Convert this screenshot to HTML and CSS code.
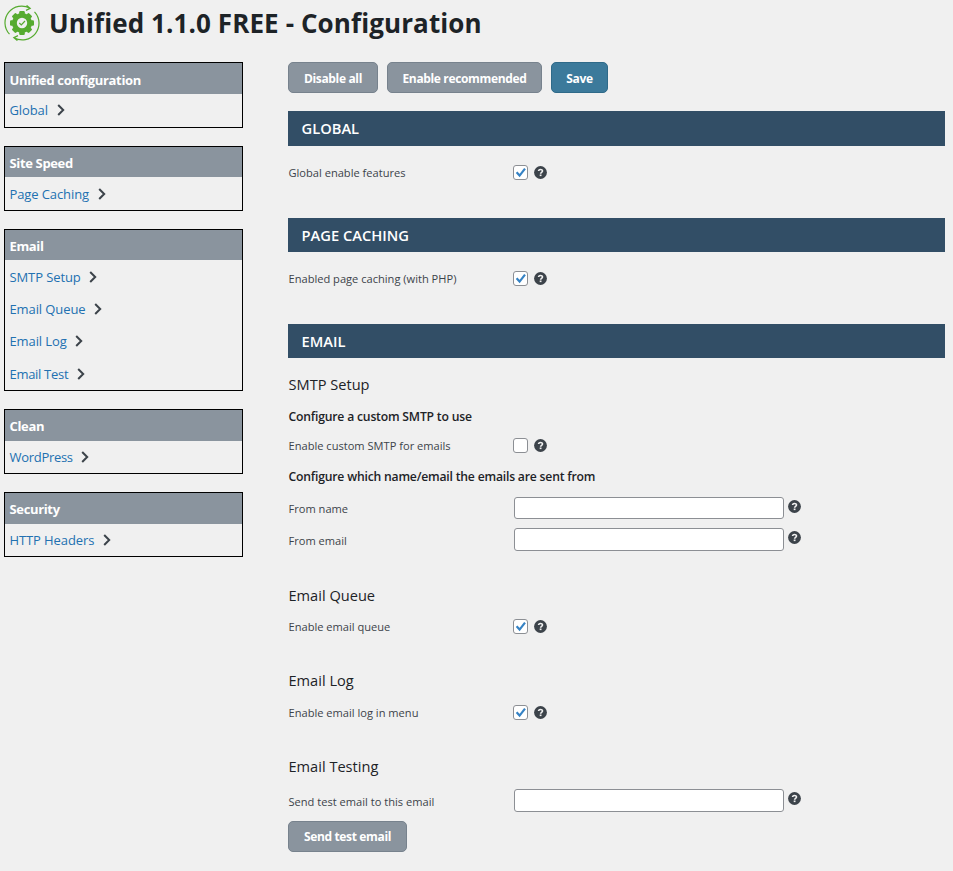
FILE: index.html
```
<!DOCTYPE html>
<html lang="en">
<head>
<meta charset="utf-8">
<title>Unified - Configuration</title>
<link rel="stylesheet" href="styles.css">
</head>
<body>
<svg class="defs" width="0" height="0" aria-hidden="true">
  <symbol id="chev" viewBox="0 0 8 12"><path d="M1.2 1 6.2 6 1.2 11" fill="none" stroke="#3c434a" stroke-width="2"/></symbol>
  <symbol id="help" viewBox="0 0 13 13"><circle cx="6.5" cy="6.5" r="6.4" fill="#3c434a"/><path d="M4.6 5.1C4.6 2.9 8.5 2.9 8.5 5c0 1.3-1.9 1.3-1.9 2.7" fill="none" stroke="#f0f0f0" stroke-width="1.6"/><rect x="5.7" y="8.5" width="1.8" height="1.6" fill="#f0f0f0"/></symbol>
  <symbol id="check" viewBox="0 0 15 15"><path d="M3.6 7.2 6.6 10.6 12 3.6" fill="none" stroke="#3582c4" stroke-width="2.2"/></symbol>
</svg>
<header class="top">
  <svg class="logo" viewBox="0 0 36 36">
    <g fill="#56ab2f">
      <circle cx="18" cy="18" r="10"/>
      <g id="t"><rect x="15.2" y="6" width="5.6" height="24" rx="1.2"/><rect x="6" y="15.2" width="24" height="5.6" rx="1.2"/></g>
      <use href="#t" transform="rotate(45 18 18)"/>
    </g>
    <circle cx="18" cy="18" r="5.2" fill="#f0f0f0"/>
    <path d="M15.3 18 17.3 20 21 16" fill="none" stroke="#56ab2f" stroke-width="1.2"/>
    <g fill="none" stroke="#56ab2f" stroke-width="1.2">
      <path d="M5.5 29.2A16.7 16.7 0 0 1 26 3.3M22.6.4 26.2 3.3 22 5.4"/>
      <path d="M30.5 6.8A16.7 16.7 0 0 1 10 32.7M13.4 35.6 9.8 32.7 14 30.6"/>
    </g>
  </svg>
  <h1>Unified 1.1.0 FREE - Configuration</h1>
</header>
<div class="layout">
  <nav class="side">
    <section class="box first"><h2>Unified configuration</h2><a>Global<svg><use href="#chev"/></svg></a></section>
    <section class="box short"><h2>Site Speed</h2><a>Page Caching<svg><use href="#chev"/></svg></a></section>
    <section class="box short tall"><h2>Email</h2><a>SMTP Setup<svg><use href="#chev"/></svg></a><a>Email Queue<svg><use href="#chev"/></svg></a><a>Email Log<svg><use href="#chev"/></svg></a><a class="snug">Email Test<svg><use href="#chev"/></svg></a></section>
    <section class="box"><h2>Clean</h2><a class="snug">WordPress<svg><use href="#chev"/></svg></a></section>
    <section class="box"><h2>Security</h2><a>HTTP Headers<svg><use href="#chev"/></svg></a></section>
  </nav>
  <main>
    <div class="actions"><button class="w90">Disable all</button><button class="w155">Enable recommended</button><button class="w57 save">Save</button></div>
    <h2 class="bar first">GLOBAL</h2>
    <div class="row lone"><label>Global enable features</label><i class="cb"><svg><use href="#check"/></svg></i><svg class="help"><use href="#help"/></svg></div>
    <h2 class="bar">PAGE CACHING</h2>
    <div class="row lone"><label>Enabled page caching (with PHP)</label><i class="cb"><svg><use href="#check"/></svg></i><svg class="help"><use href="#help"/></svg></div>
    <h2 class="bar">EMAIL</h2>
    <h3 class="near">SMTP Setup</h3>
    <h4>Configure a custom SMTP to use</h4>
    <div class="row"><label>Enable custom SMTP for emails</label><i class="cb"></i><svg class="help"><use href="#help"/></svg></div>
    <h4 class="sender">Configure which name/email the emails are sent from</h4>
    <div class="row field name"><label>From name</label><input type="text"><svg class="help"><use href="#help"/></svg></div>
    <div class="row field"><label>From email</label><input type="text"><svg class="help"><use href="#help"/></svg></div>
    <h3 class="queue">Email Queue</h3>
    <div class="row"><label>Enable email queue</label><i class="cb"><svg><use href="#check"/></svg></i><svg class="help"><use href="#help"/></svg></div>
    <h3>Email Log</h3>
    <div class="row log"><label>Enable email log in menu</label><i class="cb"><svg><use href="#check"/></svg></i><svg class="help"><use href="#help"/></svg></div>
    <h3>Email Testing</h3>
    <div class="row field test"><label>Send test email to this email</label><input type="text"><svg class="help"><use href="#help"/></svg></div>
    <button class="w119 send">Send test email</button>
  </main>
</div>
</body>
</html>
```
FILE: styles.css
```
* { box-sizing: border-box; }
body { margin: 0; height: 871px; overflow: hidden; background: #f0f0f0; color: #3c434a; font-family: "Open Sans", "Noto Sans", sans-serif; }
h1, h2, h3, h4 { margin: 0; font-weight: 600; color: #1d2327; white-space: nowrap; }
svg { display: block; flex: none; }
.defs { position: absolute; }
.top { display: flex; height: 62px; padding: 5px 0 0 4px; }
.logo { width: 36px; height: 36px; margin-right: 9px; }
.top h1 { font-size: 26px; font-weight: 700; letter-spacing: .1px; line-height: 37px; }
.layout { display: flex; gap: 45px; padding-left: 4px; }
.side { width: 239px; flex: none; }
.box { height: 65px; border: 1px solid #000; margin-bottom: 18px; }
.box.first { height: 66px; }
.box.tall { height: 162px; }
.box h2 { height: 31px; padding-left: 4.5px; background: #8a949e; color: #fff; font-size: 13px; font-weight: 700; letter-spacing: -.35px; line-height: 32px; }
.box.first h2 { padding-top: 1px; }
.box.short h2 { height: 30px; margin-bottom: .6px; }
.box a { display: flex; align-items: center; height: 32.3px; padding-left: 4.5px; color: #2271b1; font-size: 13px; letter-spacing: -.1px; line-height: 32px; }
.box a.snug { letter-spacing: -.3px; }
.box a svg { width: 8px; height: 12px; margin-left: 8.7px; }
main { width: 657px; }
.actions { display: flex; gap: 9px; }
button { height: 31px; padding: 1px 0 0; border: 1px solid #77828d; border-radius: 5px; background: #8a949e; color: #fff; font: 700 12px "Open Sans", sans-serif; letter-spacing: -.35px; }
.save { background: #3c7a9b; border-color: #2f6a89; }
.w90 { width: 90px; } .w155 { width: 155px; } .w57 { width: 57px; } .w119 { width: 119px; }
.bar { height: 34px; margin-top: 18px; padding-left: 13.5px; background: #324e66; color: #fff; font-size: 14.7px; line-height: 35px; }
.bar.first { height: 35px; }
.row { display: flex; align-items: center; height: 30px; font-size: 11.1px; }
.row.lone { height: 54px; }
label { width: 225px; flex: none; padding-left: .5px; margin-top: -2px; white-space: nowrap; }
.cb { width: 15px; height: 15px; margin-top: -1px; border: 1px solid #8c8f94; border-radius: 3px; background: #fff; }
.cb svg { width: 15px; height: 15px; margin: -1px; }
.help { width: 13px; height: 13px; margin: -1px 0 0 6px; }
h3 { height: 33px; margin-top: 22px; padding-left: .5px; font-size: 14.6px; font-weight: 500; line-height: 33px; }
h3.near { margin-top: 10px; }
h3.queue { margin-top: 23px; }
h4 { height: 30px; padding-left: .5px; font-size: 12.2px; line-height: 31px; font-weight: 600; letter-spacing: -.2px; }
h4.sender { height: 31px; }
.field { height: 32px; }
.field label { margin-top: 0; }
.log { margin-top: 1px; }
.test { margin-top: 2px; }
input { width: 270px; height: 23px; margin: -1px 0 0 1px; border: 1px solid #8c8f94; border-radius: 3px; background: #fff; }
.name input { height: 22px; margin-top: 0; }
.field .help { margin: -6px 0 0 3.5px; }
.name .help { margin-top: -4px; }
.send { display: block; margin-top: 4px; padding: 0; }
```
